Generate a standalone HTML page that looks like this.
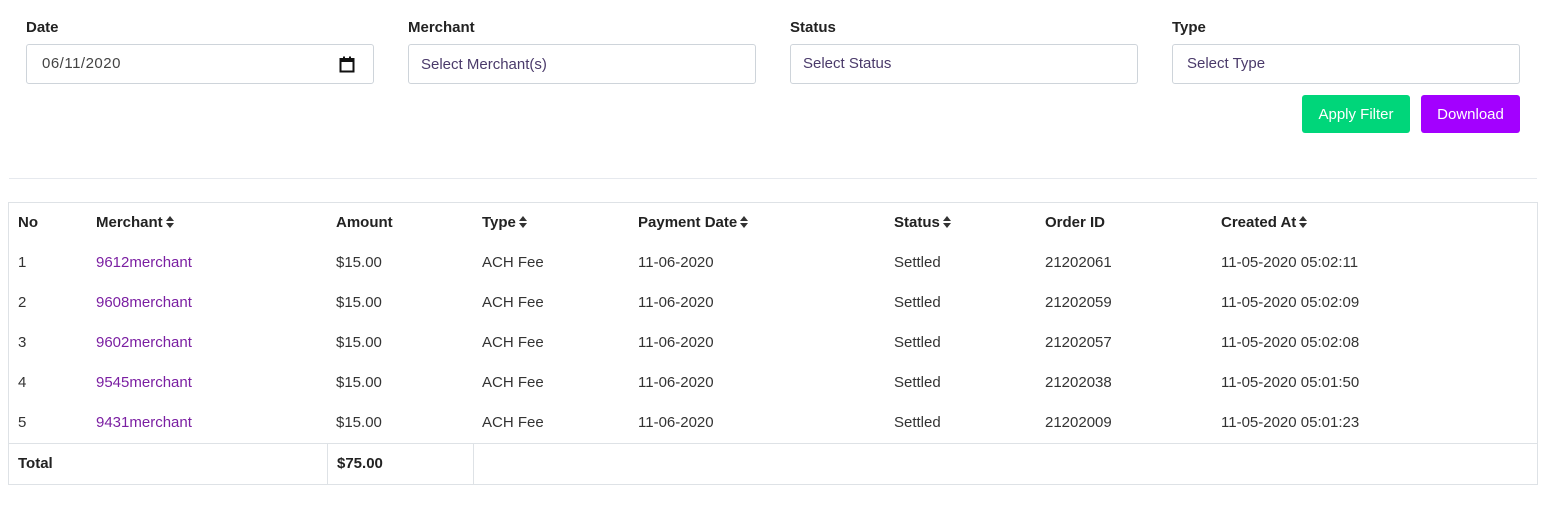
<!DOCTYPE html>
<html><head><meta charset="utf-8"><style>
*{box-sizing:border-box;margin:0;padding:0}
body{width:1560px;height:511px;background:#fff;font-family:"Liberation Sans",sans-serif;font-size:15px;color:#333;position:relative;overflow:hidden}
.a{position:absolute;white-space:nowrap}
.lbl{font-weight:bold;font-size:15px;color:#222;top:19px}
.inp{position:absolute;top:44px;height:40px;width:348px;border:1px solid #ced4da;border-radius:3px;padding:0 12px;line-height:38px;color:#4a3a6a;font-size:15px}
.btn{position:absolute;top:95px;height:38px;border-radius:3px;color:#fff;font-size:15px;line-height:39px;text-align:center}
.th{font-weight:bold;color:#222;top:214px}
.s{display:inline-block;width:8px;height:12px;vertical-align:-1px;margin-left:3px}
.m{color:#7b1fa2}
</style></head><body>
<div class="a lbl" style="left:26px">Date</div>
<div class="a lbl" style="left:408px">Merchant</div>
<div class="a lbl" style="left:790px">Status</div>
<div class="a lbl" style="left:1172px">Type</div>
<div class="inp" style="left:26px;color:#444;padding-left:15px;letter-spacing:0.5px">06/11/2020
<svg style="position:absolute;right:18px;top:11px" width="16" height="17" viewBox="0 0 16 17"><rect x="1.5" y="3" width="13" height="12.5" fill="none" stroke="#111" stroke-width="2"/><rect x="1" y="2.5" width="14" height="3.5" fill="#111"/><rect x="4" y="0.5" width="2" height="3" fill="#111"/><rect x="10" y="0.5" width="2" height="3" fill="#111"/></svg></div>
<div class="inp" style="left:408px;line-height:40px">Select Merchant(s)</div>
<div class="inp" style="left:790px">Select Status</div>
<div class="inp" style="left:1172px;padding-left:14px">Select Type</div>
<div class="btn" style="left:1302px;width:108px;background:#00d67a">Apply Filter</div>
<div class="btn" style="left:1421px;width:99px;background:#a300ff">Download</div>
<div class="a" style="left:9px;top:178px;width:1528px;height:1px;background:#e6e9ee"></div>
<div class="a" style="left:8px;top:202px;width:1530px;height:283px;border:1px solid #dee2e6"></div>
<div class="a" style="left:9px;top:443px;width:1528px;height:1px;background:#dee2e6"></div>
<div class="a" style="left:327px;top:443px;width:1px;height:41px;background:#dee2e6"></div>
<div class="a" style="left:473px;top:443px;width:1px;height:41px;background:#dee2e6"></div>
<svg width="0" height="0" style="position:absolute"><defs><symbol id="srt" viewBox="0 0 8 12"><path d="M0 5L4 0L8 5Z M0 7L4 12L8 7Z" fill="#333"/></symbol></defs></svg>
<div class="a th" style="left:18px">No</div>
<div class="a th" style="left:96px">Merchant<svg class="s"><use href="#srt"/></svg></div>
<div class="a th" style="left:336px">Amount</div>
<div class="a th" style="left:482px">Type<svg class="s"><use href="#srt"/></svg></div>
<div class="a th" style="left:638px">Payment Date<svg class="s"><use href="#srt"/></svg></div>
<div class="a th" style="left:894px">Status<svg class="s"><use href="#srt"/></svg></div>
<div class="a th" style="left:1045px">Order ID</div>
<div class="a th" style="left:1221px">Created At<svg class="s"><use href="#srt"/></svg></div>
<div class="a" style="left:18px;top:243px;line-height:40px">1<br>2<br>3<br>4<br>5</div>
<div class="a m" style="left:96px;top:243px;line-height:40px">9612merchant<br>9608merchant<br>9602merchant<br>9545merchant<br>9431merchant</div>
<div class="a" style="left:336px;top:243px;line-height:40px">$15.00<br>$15.00<br>$15.00<br>$15.00<br>$15.00</div>
<div class="a" style="left:482px;top:243px;line-height:40px">ACH Fee<br>ACH Fee<br>ACH Fee<br>ACH Fee<br>ACH Fee</div>
<div class="a" style="left:638px;top:243px;line-height:40px">11-06-2020<br>11-06-2020<br>11-06-2020<br>11-06-2020<br>11-06-2020</div>
<div class="a" style="left:894px;top:243px;line-height:40px">Settled<br>Settled<br>Settled<br>Settled<br>Settled</div>
<div class="a" style="left:1045px;top:243px;line-height:40px">21202061<br>21202059<br>21202057<br>21202038<br>21202009</div>
<div class="a" style="left:1221px;top:243px;line-height:40px">11-05-2020 05:02:11<br>11-05-2020 05:02:09<br>11-05-2020 05:02:08<br>11-05-2020 05:01:50<br>11-05-2020 05:01:23</div>
<div class="a th" style="left:18px;top:455px">Total</div>
<div class="a th" style="left:337px;top:455px">$75.00</div>
</body></html>
